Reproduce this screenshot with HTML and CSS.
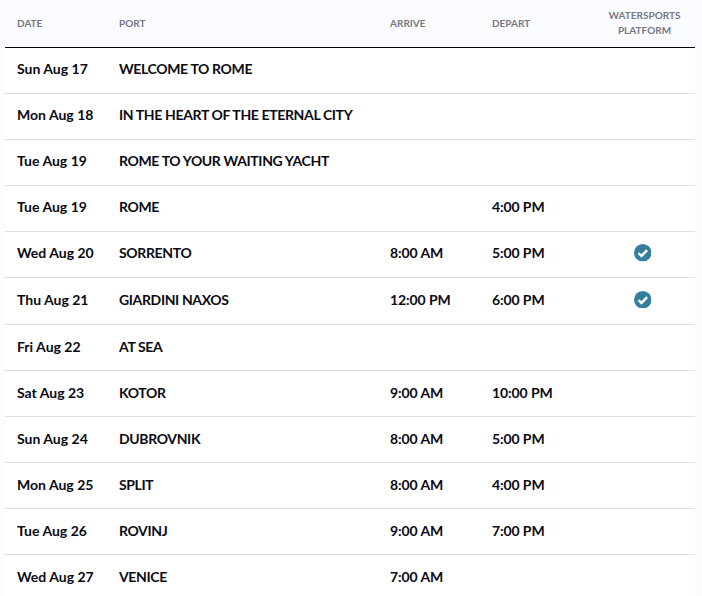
FILE: index.html
```html
<!DOCTYPE html>
<html lang="en">
<head>
<meta charset="utf-8">
<title>Itinerary</title>
<link rel="stylesheet" href="styles.css">
</head>
<body>
<svg class="defs" width="0" height="0" aria-hidden="true"><symbol id="check" viewBox="0 0 18 18"><circle cx="9" cy="9" r="9" fill="#357f9e"/><path d="M4.6 9.3l3.1 3 5.8-6" fill="none" stroke="#fff" stroke-width="2.5"/></symbol></svg>
<table class="itinerary">
<thead>
<tr><th>Date</th><th>Port</th><th>Arrive</th><th>Depart</th><th class="center">Watersports<br>Platform</th></tr>
</thead>
<tbody>
<tr><td>Sun Aug 17</td><td class="port">WELCOME TO ROME</td><td></td><td></td><td></td></tr>
<tr><td>Mon Aug 18</td><td class="port">IN THE HEART OF THE ETERNAL CITY</td><td></td><td></td><td></td></tr>
<tr><td>Tue Aug 19</td><td class="port">ROME TO YOUR WAITING YACHT</td><td></td><td></td><td></td></tr>
<tr><td>Tue Aug 19</td><td class="port">ROME</td><td></td><td class="time">4:00 PM</td><td></td></tr>
<tr class="tall-a"><td>Wed Aug 20</td><td class="port">SORRENTO</td><td class="time">8:00 AM</td><td class="time">5:00 PM</td><td class="mark"><svg class="icon"><use href="#check"/></svg></td></tr>
<tr class="tall-b"><td>Thu Aug 21</td><td class="port">GIARDINI NAXOS</td><td class="time">12:00 PM</td><td class="time">6:00 PM</td><td class="mark"><svg class="icon"><use href="#check"/></svg></td></tr>
<tr><td>Fri Aug 22</td><td class="port">AT SEA</td><td></td><td></td><td></td></tr>
<tr><td>Sat Aug 23</td><td class="port">KOTOR</td><td class="time">9:00 AM</td><td class="time">10:00 PM</td><td></td></tr>
<tr><td>Sun Aug 24</td><td class="port">DUBROVNIK</td><td class="time">8:00 AM</td><td class="time">5:00 PM</td><td></td></tr>
<tr><td>Mon Aug 25</td><td class="port">SPLIT</td><td class="time">8:00 AM</td><td class="time">4:00 PM</td><td></td></tr>
<tr><td>Tue Aug 26</td><td class="port">ROVINJ</td><td class="time">9:00 AM</td><td class="time">7:00 PM</td><td></td></tr>
<tr><td>Wed Aug 27</td><td class="port">VENICE</td><td class="time">7:00 AM</td><td></td><td></td></tr>
</tbody>
</table>
</body>
</html>
```
FILE: styles.css
```css
html, body { margin: 0; padding: 0; background: #fbfcff; overflow: hidden; height: 100%; }
body { padding: 0 7px 0 5px; font-family: Lato, "Noto Sans", sans-serif; color: #0a0a14; }
.defs { position: absolute; }
.itinerary { width: 690px; border-collapse: collapse; table-layout: fixed; background: #fff; }
.itinerary th:nth-child(1) { width: 114px; }
.itinerary th:nth-child(2) { width: 271px; }
.itinerary th:nth-child(3) { width: 102px; }
.itinerary th:nth-child(4) { width: 102px; }
.itinerary th { height: 47.5px; padding: 0; background: #fbfcff; border-bottom: 1px solid #000; color: #75787f; font-size: 10px; font-weight: 700; line-height: 15px; text-transform: uppercase; text-align: left; box-sizing: border-box; }
.itinerary th:first-child, .itinerary td:first-child { padding-left: 12px; }
.itinerary td { height: 46px; padding: 0 0 4px; border-bottom: 1px solid #dedede; font-size: 14px; font-weight: 700; box-sizing: border-box; }
.itinerary tbody tr:nth-child(n+7) td { padding-bottom: 2.5px; }
.itinerary .tall-a td { height: 46.2px; }
.itinerary .tall-b td { height: 47px; }
.itinerary .port { letter-spacing: -0.36px; }
.itinerary .time { letter-spacing: -0.1px; }
.itinerary .center { text-align: center; padding-bottom: 2px; }
.itinerary .mark { padding: 0 4px 3px 0; }
.icon { display: block; width: 17.5px; height: 17.5px; margin: 0 auto; }
```
